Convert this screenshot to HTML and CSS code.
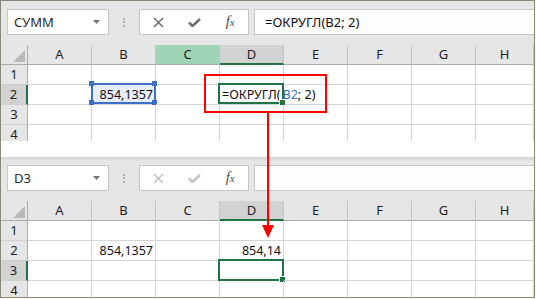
FILE: index.html
```html
<!DOCTYPE html>
<html lang="ru">
<head>
<meta charset="utf-8">
<title>ОКРУГЛ</title>
<link rel="stylesheet" href="styles.css">
</head>
<body>
<div class="frame">
  <section class="panel">
    <div class="toolbar">
      <div class="namebox"><span>СУММ</span><svg class="caret" width="7" height="4" viewBox="0 0 7 4"><path d="M0 0H7L3.5 4Z"/></svg></div>
      <div class="grip"><i></i><i></i><i></i></div>
      <div class="fxbox">
        <span class="slot"><svg width="11" height="11" viewBox="0 0 11 11"><path d="M1 1L10 10M10 1L1 10" class="ico"/></svg></span>
        <span class="slot"><svg width="13" height="9" viewBox="0 0 13 9"><path d="M1 4.5L4.5 8L12 1" class="ico thick"/></svg></span>
        <span class="slot fx">f<small>x</small></span>
      </div>
      <div class="formula">=ОКРУГЛ(B2; 2)</div>
    </div>
    <div class="grid">
      <div class="corner"><svg width="12" height="12" viewBox="0 0 12 12"><path d="M0 12H12V0Z"/></svg></div>
      <div class="ch">A</div><div class="ch">B</div><div class="ch ref">C</div><div class="ch sel">D</div><div class="ch">E</div><div class="ch">F</div><div class="ch">G</div><div class="ch">H</div>

      <div class="rh">1</div><div class="c"></div><div class="c"></div><div class="c"></div><div class="c"></div><div class="c"></div><div class="c"></div><div class="c"></div><div class="c"></div>

      <div class="rh sel">2</div><div class="c"></div>
      <div class="c num blue">854,1357<span class="box bluebox"><i class="h tl"></i><i class="h tr"></i><i class="h bl"></i><i class="h br"></i></span></div>
      <div class="c"></div>
      <div class="c edit">=ОКРУГЛ(<span class="refb">B2</span>; 2)<span class="box greenbox"><i class="fill"></i></span></div>
      <div class="c"></div><div class="c"></div><div class="c"></div><div class="c"></div>

      <div class="rh">3</div><div class="c"></div><div class="c"></div><div class="c"></div><div class="c"></div><div class="c"></div><div class="c"></div><div class="c"></div><div class="c"></div>

      <div class="rh">4</div><div class="c"></div><div class="c"></div><div class="c"></div><div class="c"></div><div class="c"></div><div class="c"></div><div class="c"></div><div class="c"></div>
    </div>
  </section>

  <div class="gap"></div>

  <section class="panel second">
    <div class="toolbar">
      <div class="namebox"><span>D3</span><svg class="caret" width="7" height="4" viewBox="0 0 7 4"><path d="M0 0H7L3.5 4Z"/></svg></div>
      <div class="grip"><i></i><i></i><i></i></div>
      <div class="fxbox off">
        <span class="slot"><svg width="11" height="11" viewBox="0 0 11 11"><path d="M1 1L10 10M10 1L1 10" class="ico"/></svg></span>
        <span class="slot"><svg width="13" height="9" viewBox="0 0 13 9"><path d="M1 4.5L4.5 8L12 1" class="ico thick"/></svg></span>
        <span class="slot fx">f<small>x</small></span>
      </div>
      <div class="formula"></div>
    </div>
    <div class="grid">
      <div class="corner"><svg width="12" height="12" viewBox="0 0 12 12"><path d="M0 12H12V0Z"/></svg></div>
      <div class="ch">A</div><div class="ch">B</div><div class="ch">C</div><div class="ch sel">D</div><div class="ch">E</div><div class="ch">F</div><div class="ch">G</div><div class="ch">H</div>

      <div class="rh">1</div><div class="c"></div><div class="c"></div><div class="c"></div><div class="c"></div><div class="c"></div><div class="c"></div><div class="c"></div><div class="c"></div>

      <div class="rh">2</div><div class="c"></div><div class="c num">854,1357</div><div class="c"></div><div class="c num">854,14</div><div class="c"></div><div class="c"></div><div class="c"></div><div class="c"></div>

      <div class="rh sel">3</div><div class="c"></div><div class="c"></div><div class="c"></div>
      <div class="c"><span class="box greenbox"><i class="fill"></i></span></div>
      <div class="c"></div><div class="c"></div><div class="c"></div><div class="c"></div>

      <div class="rh">4</div><div class="c"></div><div class="c"></div><div class="c"></div><div class="c"></div><div class="c"></div><div class="c"></div><div class="c"></div><div class="c"></div>
    </div>
  </section>

  <svg class="annot" width="536" height="299" viewBox="0 0 536 299">
    <rect x="205" y="75" width="121" height="37" fill="none" stroke="#ff0000" stroke-width="2"/>
    <path d="M268 112V226" stroke="#ff0000" stroke-width="2"/>
    <path d="M262 225H274L268 238Z" fill="#ff0000"/>
  </svg>
</div>
</body>
</html>
```

FILE: styles.css
```css
* { box-sizing: border-box; margin: 0; padding: 0; }
html, body { width: 536px; height: 299px; overflow: hidden; }
body {
  background: #fdfce8;
  font-family: "Noto Sans", "DejaVu Sans", sans-serif;
  color: #222;
}
.frame {
  position: relative;
  width: 535px;
  height: 298px;
  border: 1px solid #8a8a7a;
  background: #fff;
  display: flex;
  flex-direction: column;
  overflow: hidden;
}
.panel {
  height: 140px;
  flex: none;
  display: flex;
  flex-direction: column;
  overflow: hidden;
}
.gap { height: 16px; flex: none; background: #fff; }

/* toolbar */
.toolbar {
  height: 44px;
  flex: none;
  background: #e6e6e6;
  display: flex;
  align-items: flex-start;
  padding: 8px 0 0 6px;
}
.second .toolbar { background: linear-gradient(#d3d3d3, #e6e6e6 4px); }
.namebox {
  width: 102px;
  height: 26px;
  background: #fff;
  border: 1px solid #c6c6c6;
  display: flex;
  align-items: center;
  justify-content: space-between;
  padding: 0 8px 0 6px;
  font-size: 13px;
  line-height: 24px;
  color: #2b2b2b;
}
.caret { fill: #757575; display: block; }
.grip {
  width: 30px;
  height: 26px;
  display: flex;
  flex-direction: column;
  align-items: center;
  justify-content: center;
  gap: 1.5px;
}
.grip i { width: 2px; height: 2px; background: #adadad; display: block; }
.fxbox {
  width: 110px;
  height: 26px;
  background: #fff;
  border: 1px solid #c6c6c6;
  display: flex;
  align-items: center;
  padding-left: 1px;
}
.slot {
  width: 36px;
  height: 24px;
  display: flex;
  align-items: center;
  justify-content: center;
}
.ico { fill: none; stroke: #6f6f6f; stroke-width: 1.6; }
.ico.thick { stroke-width: 2.6; }
.off .ico { stroke: #c3c3c3; }
.fx {
  font-family: "Liberation Serif", serif;
  font-style: italic;
  font-size: 15px;
  color: #4d4d4d;
  padding-bottom: 1px;
}
.fx small { font-size: 11px; }
.formula {
  flex: 1;
  height: 26px;
  margin-left: 5px;
  background: #fdfdfd;
  border: 1px solid #c6c6c6;
  border-right: none;
  padding-left: 10px;
  font-size: 13px;
  line-height: 24px;
  color: #111;
}

/* grid */
.grid {
  display: grid;
  grid-template-columns: 27px repeat(7, 64px) 58px;
  grid-auto-rows: 20px;
  background: #fff;
}
.corner {
  background: #e6e6e6;
  border-right: 1px solid #ababab;
  border-bottom: 1px solid #ababab;
  display: flex;
  justify-content: flex-end;
  align-items: flex-end;
  padding: 0 2px 2px 0;
}
.corner svg { display: block; fill: #b9b9b9; }
.ch {
  background: #e6e6e6;
  border-right: 1px solid #c4c4c4;
  border-bottom: 1px solid #ababab;
  text-align: center;
  font-size: 13px;
  line-height: 19px;
  color: #1e1e1e;
}
.ch.ref { background: #9fd5b6; }
.ch.sel { background: #d2d2d2; border-bottom: 2px solid #217346; }
.rh {
  background: #e6e6e6;
  border-right: 1px solid #ababab;
  border-bottom: 1px solid #cfcfcf;
  text-align: center;
  font-size: 13px;
  line-height: 19px;
  color: #1e1e1e;
}
.rh.sel { background: #d2d2d2; border-right: 2px solid #217346; }
.c {
  position: relative;
  border-right: 1px solid #d4d4d4;
  border-bottom: 1px solid #d4d4d4;
  font-size: 12.5px;
  line-height: 19px;
  color: #111;
  white-space: nowrap;
}
.c.num { text-align: right; padding-right: 2px; }
.c.blue { background: #e8eef8; }
.c.edit { padding-left: 2px; font-size: 12.6px; overflow: visible; z-index: 1; }
.refb { color: #3b6fc6; margin-left: 2px; }

.box {
  position: absolute;
  top: -2px;
  left: -2px;
  right: -1px;
  bottom: -1px;
  border: 2px solid #217346;
}
.bluebox { border-color: #3d6fc6; top: -2px; left: -1px; right: -1px; bottom: 0; }
.edit .greenbox { bottom: 0; }
.h {
  position: absolute;
  width: 5px;
  height: 5px;
  background: #3d6fc6;
}
.h.tl { top: -4px; left: -4px; }
.h.tr { top: -4px; right: -3px; }
.h.bl { bottom: -3px; left: -4px; }
.h.br { bottom: -3px; right: -3px; }
.fill {
  position: absolute;
  right: -4px;
  bottom: -4px;
  width: 7px;
  height: 7px;
  background: #217346;
  border: 1px solid #fff;
}

.annot {
  position: absolute;
  top: -1px;
  left: -1px;
  z-index: 5;
}
```
